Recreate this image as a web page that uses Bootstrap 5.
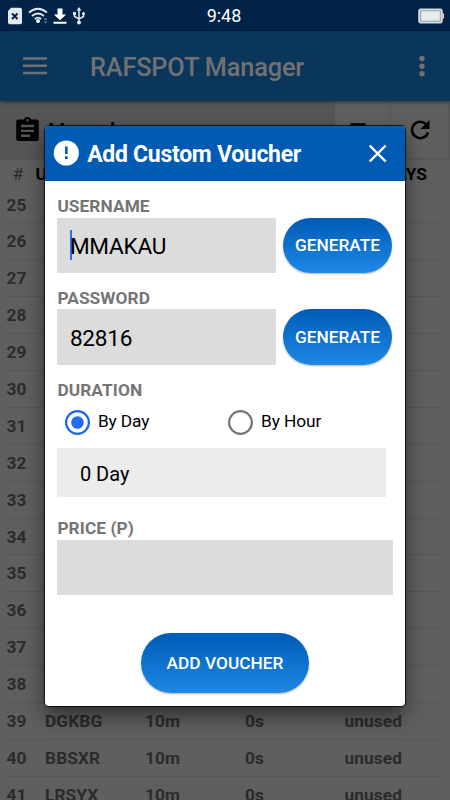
<!DOCTYPE html>
<html lang="en">
<head>
<meta charset="utf-8">
<meta name="viewport" content="width=device-width, initial-scale=1">
<title>RAFSPOT Manager</title>
<link href="https://cdn.jsdelivr.net/npm/bootstrap@5.3.0/dist/css/bootstrap.min.css" rel="stylesheet">
<style>
body{font-family:Roboto,"Liberation Sans",sans-serif;width:450px;height:800px;overflow:hidden;background:#5f5f5f;color:#000}
svg{display:block;flex:none}
.screen{height:800px}
.status{height:31px;background:#002347;color:#fff;padding-left:7px}
.status .clock{width:50px;margin-left:113px;font-size:18px;line-height:33px}
.status .batt{margin-left:169px}
.appbar{height:70px;background:#0b365c;color:#717171;padding-left:23px;box-shadow:0 1px 4px rgba(0,0,0,.55);z-index:1}
.appbar h1{font-size:25.3px;font-weight:500;margin:3px 0 0 43px;width:329px;line-height:30px;letter-spacing:-.15px}
.titlebar{height:58.5px;background:#565656}
.titlebar h2{font-size:24px;font-weight:500;margin:3px 0 0 10px;line-height:28px;letter-spacing:1.6px}
.tool{height:58.5px;background:#5f5f5f}
.tool-a{width:56px;border-right:1px solid #575757;padding-right:9px}
.tool-b{width:59px;border-right:2px solid #575757;border-bottom:2px solid #575757}
.thead{height:26px;font-size:17.3px;font-weight:700;line-height:29px;margin-left:12.5px}
.thead .num{width:23px;color:#2b2b2b}
.thead .days{padding-right:23px}
.vrow{height:36.9px;line-height:38px;margin:0 6.5px;color:#2b2b2b;font-size:17.3px;font-weight:700;letter-spacing:.1px;box-shadow:0 1px 0 #565656}
.c1{width:38.5px}.c2{width:100px}.c3{width:100px}.c4{width:99.5px}
.dialog-layer{inset:0;padding:125.5px 44.7px 94px}
.dialog{height:580.5px;border-radius:4px;background:#fff;overflow:hidden;box-shadow:0 0 1px 1px rgba(0,0,0,.75),0 10px 20px rgba(0,0,0,.5)}
.dialog-head{height:55.5px;background:#005bb5;color:#fff;padding:0 18.5px 0 8px}
.dialog-head h3{font-size:23px;font-weight:700;margin:4px 0 0 8.5px;line-height:28px;letter-spacing:-.29px}
.dialog-body{padding:16px 12.7px 0}
.field-label{font-size:17.3px;font-weight:700;color:#757575;line-height:19px;height:20.5px;display:block;letter-spacing:.08px}
.gap-top{margin-top:16.2px}
.form-control.entry{width:219px;height:55.3px;border:0;border-radius:0;background:#dcdcdc;color:#000;font-size:22.6px;padding:2px 12.5px 0;line-height:51px;letter-spacing:-.25px}
.form-control.entry.wide{width:100%}
.caret{width:2px;height:30px;background:#2a6df0;margin:-3px -2px 0 0}
.pill{border:0;border-radius:28px;background:linear-gradient(#005bb5,#1e88e5);color:#fff;font-weight:500;font-size:17.3px;padding:2px 0 0;box-shadow:0 1px 2px rgba(0,0,0,.3)}
.gen{width:109.7px;height:55.3px;margin-right:.3px}
.add{width:167.5px;height:60px;border-radius:30px}
.add-line{margin-top:37.5px}
.choice{width:163.2px;height:46.5px;padding-left:7.5px;font-size:17.3px;letter-spacing:-.1px;gap:8px;padding-bottom:5px}
.dur{width:328.7px;height:49.5px;background:#ececec;font-size:20px;padding:3px 0 0 22.5px}
.price{margin-top:22px}
</style>
<script src="https://cdn.jsdelivr.net/npm/bootstrap@5.3.0/dist/js/bootstrap.bundle.min.js"></script>
</head>
<body>
<div class="screen d-flex flex-column position-relative overflow-hidden">
 <div class="status d-flex align-items-center flex-shrink-0">
  <svg width="16" height="18" viewBox="0 0 16 18"><path d="M4 .8h9q2 0 2 2v12.500q0 2-2 2H3q-2 0-2-2V4z" fill="#e4eaf0"/><path d="m5 6.500 5.500 5.500m0-5.500L5 12" stroke="#002347" stroke-width="1.900"/></svg>
  <svg class="ms-1" width="23" height="18" viewBox="0 0 23 18" fill="none" stroke="#e8edf2" stroke-width="1.700"><path d="M2 5.500q9-7.500 18 0M5 9q6-5 12 0M7.800 12q3.200-2.600 6.400 0"/><circle cx="11" cy="14" r="2" fill="#fff" stroke="none"/><path d="m16.700 12.700 1.800-2 1.800 2zm0 1.800 1.800 2 1.800-2z" fill="#7a8aa0" stroke="none"/></svg>
  <svg width="22" height="18" viewBox="0 0 22 18" fill="#fff"><path d="M7.500 1.500h5v6h3.700L10 13.300 3.800 7.500h3.700zM3.500 14.800h13v1.900h-13z"/></svg>
  <svg width="14" height="18" viewBox="0 0 14 18" fill="none" stroke="#e4eaf0" stroke-width="1.500"><path d="M7 2v13M2.500 6v3.500L7 12l4.500-2.500V6"/><path d="m7 0 2.500 3.500h-5zM1 5h3v3H1z" fill="#e4eaf0" stroke="none"/><circle cx="11.500" cy="6.500" r="1.500" fill="#e4eaf0" stroke="none"/><circle cx="7" cy="15.500" r="2" fill="#e4eaf0" stroke="none"/></svg>
  <div class="clock text-center">9:48</div>
  <svg class="batt" width="27" height="16" viewBox="0 0 27 16"><rect x=".8" y="1" width="23.400" height="14" rx="1.500" fill="#dfe3e6" stroke="#d5d9dd"/><rect x="2.700" y="2.800" width="19.600" height="10.400" fill="#e8ecef" stroke="#929ba5"/><path d="M24.500 5.500h1.500v5h-1.500" fill="#ddd"/></svg>
 </div>
 <nav class="appbar d-flex align-items-center flex-shrink-0">
  <svg width="24" height="18" viewBox="0 0 24 18"><path d="M0 1.500h24M0 8.700h24M0 15.900h24" stroke="#717171" stroke-width="2.500"/></svg>
  <h1>RAFSPOT Manager</h1>
  <svg width="6" height="22" viewBox="0 0 6 22" fill="#717171"><circle cx="3" cy="3.500" r="2.700"/><circle cx="3" cy="11.200" r="2.700"/><circle cx="3" cy="18.700" r="2.700"/></svg>
 </nav>
 <div class="titlebar d-flex align-items-center flex-shrink-0">
  <svg class="ms-3" width="23" height="26" viewBox="0 0 23 26"><path fill-rule="evenodd" d="M2.500 2.500h5.300a4 4 0 0 1 7.400 0h5.300q2.300 0 2.300 2.300v17q0 2.300-2.300 2.300h-18Q.200 24.100.200 21.800v-17q0-2.300 2.300-2.300zM11.500 2a1.200 1.200 0 1 0 0 2.400 1.200 1.200 0 0 0 0-2.400zM5 7.700v2.500h13V7.700zm0 5V15h13v-2.300zm0 4.900V20h9v-2.400z"/></svg>
  <h2>Vouchers</h2>
  <div class="tool tool-a d-flex align-items-center justify-content-center ms-auto"><svg width="24" height="16" viewBox="0 0 24 16"><path d="M4.500 2.500h15M8 8.500h9M10 14h5" stroke="#000" stroke-width="2.500"/></svg></div>
  <div class="tool tool-b d-flex align-items-center justify-content-center"><svg width="22" height="22" viewBox="0 0 22 22"><path d="M16.900 6A8.200 8.200 0 1 0 19 14.500" fill="none" stroke="#000" stroke-width="2.500"/><path d="M20.500 2v9h-9z"/></svg></div>
 </div>
 <div class="thead d-flex flex-shrink-0"><span class="num fw-normal">#</span><span>USER</span><span class="days ms-auto">DAYS</span></div>
 <div id="rows"></div>

 <div class="dialog-layer position-absolute">
  <div class="dialog" role="dialog" aria-label="Add Custom Voucher">
   <div class="dialog-head d-flex align-items-center">
    <svg width="26" height="26" viewBox="0 0 26 26"><circle cx="13.300" cy="13" r="12.600" fill="#fff"/><path d="M13.300 6.500v7.500M13.300 16.200v2.700" stroke="#005bb5" stroke-width="2.600"/></svg>
    <h3>Add Custom Voucher</h3>
    <svg class="ms-auto" width="18" height="18" viewBox="0 0 18 18"><path d="m.7 1.500 16 16M16.700 1.500l-16 16" stroke="#fff" stroke-width="2.300"/></svg>
   </div>
   <div class="dialog-body">
    <label class="field-label">USERNAME</label>
    <div class="d-flex justify-content-between">
     <div class="form-control entry d-flex align-items-center"><span class="caret"></span><span>MMAKAU</span></div>
     <button class="btn pill gen text-white">GENERATE</button>
    </div>
    <label class="field-label gap-top">PASSWORD</label>
    <div class="d-flex justify-content-between">
     <div class="form-control entry d-flex align-items-center">82816</div>
     <button class="btn pill gen text-white">GENERATE</button>
    </div>
    <label class="field-label gap-top">DURATION</label>
    <div class="d-flex">
     <div class="choice d-flex align-items-center"><svg width="25" height="25" viewBox="0 0 25 25"><circle cx="12.500" cy="12.500" r="11.400" fill="none" stroke="#1a66ee" stroke-width="2.200"/><circle cx="12.500" cy="12.500" r="6.300" fill="#286aee"/></svg><span>By Day</span></div>
     <div class="choice d-flex align-items-center"><svg width="25" height="25" viewBox="0 0 25 25"><circle cx="12.500" cy="12.500" r="11.400" fill="none" stroke="#757575" stroke-width="2.200"/></svg><span>By Hour</span></div>
    </div>
    <div class="dur d-flex align-items-center">0 Day</div>
    <label class="field-label price">PRICE (P)</label>
    <div class="form-control entry wide"></div>
    <div class="add-line text-center"><button class="btn pill add text-white">ADD VOUCHER</button></div>
   </div>
  </div>
 </div>
</div>
<script>
const users={39:'DGKBG',40:'BBSXR',41:'LRSYX'};
let html='';
for(let n=25;n<=41;n++){
  const u=users[n];
  html+=`<div class="vrow d-flex"><span class="c1">${n}</span>`+(u?`<span class="c2">${u}</span><span class="c3">10m</span><span class="c4">0s</span><span>unused</span>`:'')+'</div>';
}
document.getElementById('rows').innerHTML=html;
</script>
</body>
</html>
